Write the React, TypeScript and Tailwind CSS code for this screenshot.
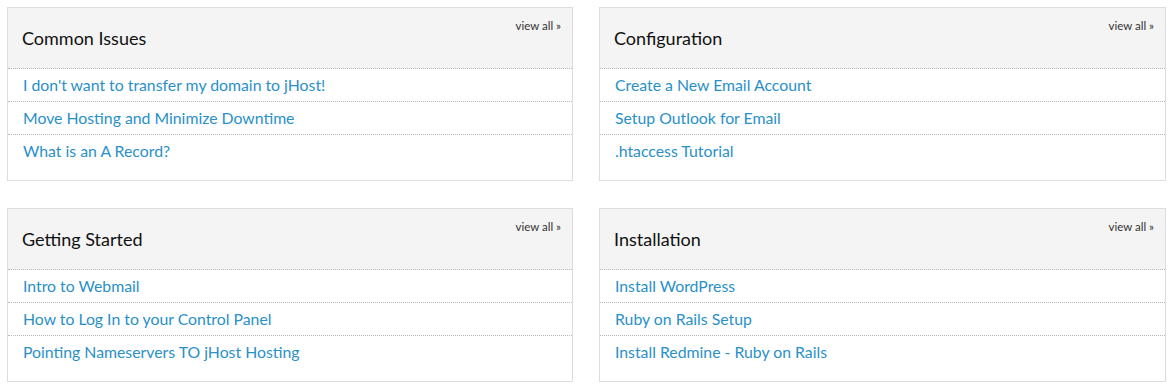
const sections = [
  {
    title: "Common Issues",
    links: [
      "I don't want to transfer my domain to jHost!",
      "Move Hosting and Minimize Downtime",
      "What is an A Record?",
    ],
  },
  {
    title: "Configuration",
    links: ["Create a New Email Account", "Setup Outlook for Email", ".htaccess Tutorial"],
  },
  {
    title: "Getting Started",
    links: [
      "Intro to Webmail",
      "How to Log In to your Control Panel",
      "Pointing Nameservers TO jHost Hosting",
    ],
  },
  {
    title: "Installation",
    links: ["Install WordPress", "Ruby on Rails Setup", "Install Redmine - Ruby on Rails"],
  },
];

function KbPanel({ title, links }: { title: string; links: string[] }) {
  return (
    <div className="border border-[#dddddd] bg-white">
      {/* Header */}
      <div className="relative h-[61px] bg-[#f4f4f4] border-b border-dotted border-[#b8b8b8] flex items-center px-[14px]">
        <h3 className="text-[18px] text-[#111] leading-none pb-[1px]">{title}</h3>
        <a href="#" className="absolute right-[11px] top-[12px] text-[11.5px] text-[#333] leading-none">
          view all »
        </a>
      </div>

      {/* Links */}
      <ul className="pb-[13px]">
        {links.map((link, i) => (
          <li
            key={link}
            className={
              i < links.length - 1
                ? "h-[33px] border-b border-dotted border-[#b8b8b8] flex items-center px-[15px]"
                : "h-[32px] flex items-center px-[15px]"
            }
          >
            <a href="#" className="text-[15.8px] text-[#2a90c8] leading-none">
              {link}
            </a>
          </li>
        ))}
      </ul>
    </div>
  );
}

export default function App() {
  return (
    <div
      className="w-[1174px] h-[386px] bg-white pl-[7px] pt-[7px]"
      style={{ fontFamily: "Lato, 'Open Sans', sans-serif" }}
    >
      <div className="grid grid-cols-[566px_567px] gap-x-[26px] gap-y-[27px]">
        {sections.map((s) => (
          <KbPanel key={s.title} title={s.title} links={s.links} />
        ))}
      </div>
    </div>
  );
}
